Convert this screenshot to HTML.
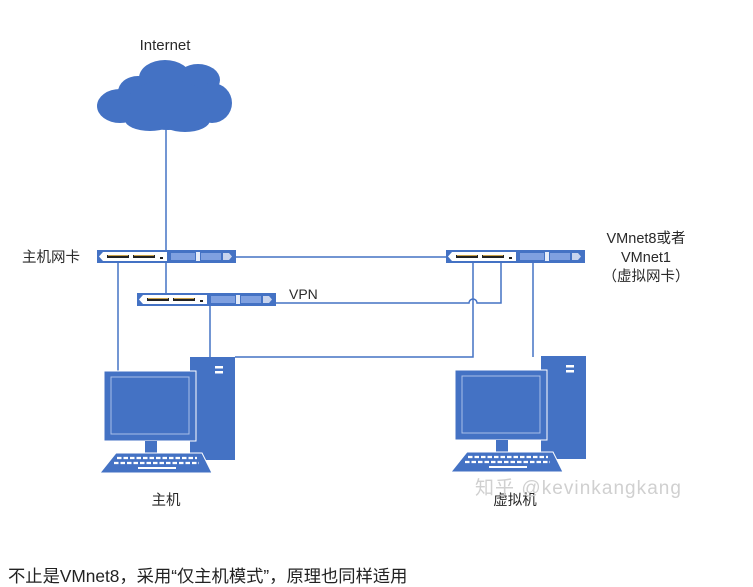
<!DOCTYPE html>
<html><head><meta charset="utf-8"><style>
html,body{margin:0;padding:0;background:#fff;width:753px;height:577px;overflow:hidden}
svg{position:absolute;left:0;top:0}
.t{font-family:"Liberation Sans","Noto Sans CJK SC",sans-serif;fill:#2a2a2a}
.bt{position:absolute;left:8px;top:562px;font:17.3px "Liberation Sans","Noto Sans CJK SC",sans-serif;color:#222;white-space:nowrap}
</style></head><body>
<svg width="753" height="577" viewBox="0 0 753 577">
<defs>
<g id="sw">
<rect x="0" y="0" width="139" height="13" fill="#4472c4"/>
<polygon points="6,2 70,2 70,11 6,11 2,6.5" fill="#fff"/>
<g fill="#222"><rect x="10" y="5" width="22" height="3"/><rect x="36" y="5" width="22" height="3"/></g>
<g fill="#c9a14a"><rect x="11" y="5" width="20" height="1"/><rect x="37" y="5" width="20" height="1"/></g>
<rect x="63" y="7" width="3" height="2" fill="#222"/>
<g fill="#7fa0e0"><rect x="74" y="3" width="24" height="7"/><rect x="104" y="3" width="20" height="7"/></g>
<rect x="99" y="2" width="4" height="9" fill="#e6ecf8"/>
<polygon points="126,3 132,3 135,6.5 132,10 126,10" fill="#c8d4ee"/>
</g>
<g id="pc">
<rect x="86" y="0" width="45" height="103" fill="#4472c4"/>
<rect x="111" y="9" width="8" height="2.5" fill="#fff"/><rect x="111" y="14" width="8" height="2.5" fill="#fff"/>
<rect x="0" y="14" width="92" height="70" fill="#4472c4" stroke="#fff" stroke-width="1"/>
<rect x="7" y="20" width="78" height="57" fill="none" stroke="#a9bfe8" stroke-width="1"/>
<rect x="41" y="84" width="12" height="12" fill="#4472c4"/>
<polygon points="12,96 98,96 108,116 -4,116" fill="#4472c4" stroke="#fff" stroke-width="1"/>
<g stroke="#fff" stroke-width="2.2" stroke-dasharray="4.5 2"><line x1="13" y1="101" x2="93" y2="101"/><line x1="10" y1="106" x2="95" y2="106"/></g>
<rect x="34" y="110" width="38" height="2" fill="#fff"/>
</g>
</defs>
<text class="t" x="165" y="50" font-size="15" text-anchor="middle">Internet</text>
<g fill="#4472c4">
<ellipse cx="120" cy="106" rx="23" ry="17"/>
<ellipse cx="138" cy="92" rx="20" ry="16"/>
<ellipse cx="165" cy="78" rx="26" ry="18"/>
<ellipse cx="198" cy="80" rx="22" ry="16"/>
<ellipse cx="212" cy="103" rx="20" ry="20"/>
<ellipse cx="168" cy="105" rx="42" ry="25"/>
<ellipse cx="150" cy="120" rx="25" ry="11"/>
<ellipse cx="185" cy="120" rx="25" ry="12"/>
</g>
<g stroke="#4472c4" stroke-width="1.5" fill="none">
<line x1="166" y1="128" x2="166" y2="251"/>
<line x1="236" y1="257" x2="446" y2="257"/>
<line x1="118" y1="263" x2="118" y2="371"/>
<line x1="166" y1="263" x2="166" y2="294"/>
<line x1="210" y1="306" x2="210" y2="358"/>
<path d="M276 303 H469 a4 4 0 0 1 8 0 H501 V263"/>
<path d="M473 263 V357 H235"/>
<line x1="533" y1="263" x2="533" y2="357"/>
</g>
<use href="#sw" x="97" y="250"/>
<use href="#sw" x="137" y="293"/>
<use href="#sw" x="446" y="250"/>
<use href="#pc" x="104" y="357"/>
<use href="#pc" x="455" y="356"/>
<text class="t" x="22" y="262" font-size="14.5">主机网卡</text>
<text class="t" x="289" y="299" font-size="14">VPN</text>
<text class="t" x="646" y="243" font-size="14.5" text-anchor="middle">VMnet8或者</text>
<text class="t" x="646" y="262" font-size="14.5" text-anchor="middle">VMnet1</text>
<text class="t" x="646" y="281" font-size="14.5" text-anchor="middle">（虚拟网卡）</text>
<text class="t" x="166" y="505" font-size="14.5" text-anchor="middle">主机</text>
<text class="t" x="515" y="505" font-size="14.5" text-anchor="middle">虚拟机</text>
<text x="475" y="494" font-size="19" textLength="206" style="font-family:'Liberation Sans','Noto Sans CJK SC',sans-serif" fill="#d0d0d0">知乎 @kevinkangkang</text>
</svg>
<div class="bt">不止是VMnet8，采用“仅主机模式”，原理也同样适用</div>
</body></html>
